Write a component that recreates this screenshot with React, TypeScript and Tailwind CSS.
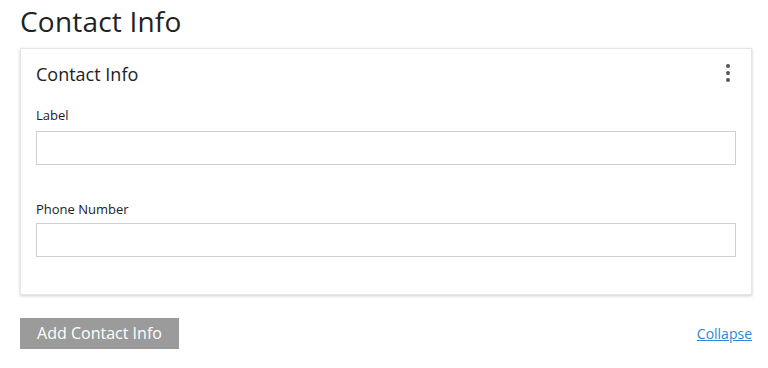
import React from "react";

export default function App() {
  return (
    <div className="bg-white w-[768px] h-[368px] pl-5 pr-4" style={{ fontFamily: '"Open Sans", sans-serif' }}>
      <h1 className="text-[28px] leading-[40px] text-[#222] pt-[1px] tracking-[0.2px]">Contact Info</h1>
      <div className="mt-[7px] bg-white border border-[#e6e6e6] shadow-[0_1px_3px_rgba(0,0,0,0.2)] px-[15px] pt-[12px] pb-[37px]">
        <div className="flex items-start justify-between">
          <h2 className="text-[18px] leading-[26px] text-[#222]">Contact Info</h2>
          <div className="flex flex-col items-center gap-[3px] pt-[3px] pr-[6px]">
            <span className="block w-[4px] h-[4px] rounded-full bg-[#555]" />
            <span className="block w-[4px] h-[4px] rounded-full bg-[#555]" />
            <span className="block w-[4px] h-[4px] rounded-full bg-[#555]" />
          </div>
        </div>
        <label className="block mt-[19px] text-[13px] leading-[18px] text-[#222]">Label</label>
        <input className="block mt-[7px] w-full h-[34px] border border-[#cfcfcf] bg-white outline-none" />
        <label className="block mt-[35px] text-[13px] leading-[18px] text-[#222]">Phone Number</label>
        <input className="block mt-[5px] w-full h-[34px] border border-[#cfcfcf] bg-white outline-none" />
      </div>
      <div className="flex items-center justify-between mt-[23px]">
        <button className="bg-[#9b9b9b] text-white text-[16px] leading-[31px] h-[31px] w-[159px]">Add Contact Info</button>
        <a href="#" className="text-[14px] text-[#2f86d6] underline">Collapse</a>
      </div>
    </div>
  );
}
